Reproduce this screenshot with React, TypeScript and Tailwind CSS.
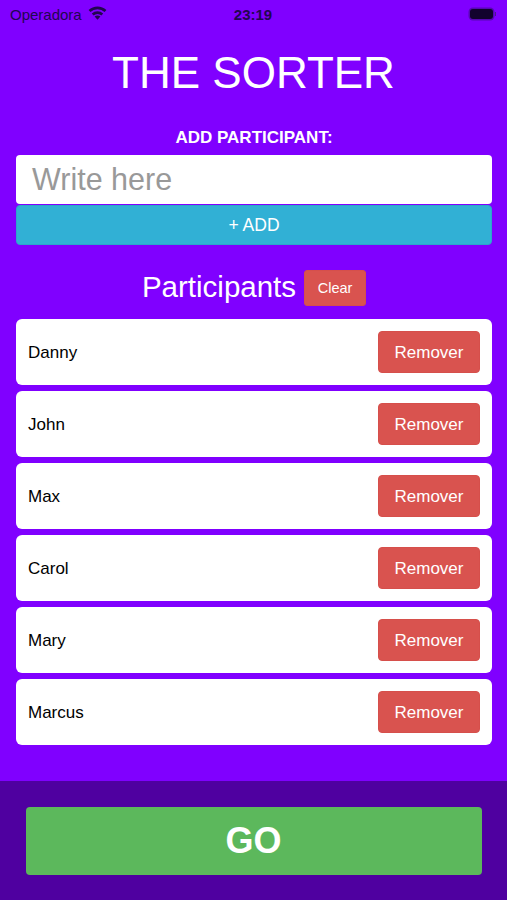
const participants = ["Danny", "John", "Max", "Carol", "Mary", "Marcus"];

const App = () => {
  return (
    <div
      className="flex h-[900px] w-full flex-col overflow-hidden bg-[#8000ff] text-white"
      style={{ fontFamily: '"Liberation Sans", Arial, sans-serif' }}
    >
      {/* Status bar */}
      <div className="grid h-[28px] shrink-0 grid-cols-3 items-center pl-[10px] pr-[11px] text-[#220650]">
        <div className="flex items-center gap-[6px]">
          <span className="text-[15px] leading-none">Operadora</span>
          <svg width="19" height="14" viewBox="0 0 19 14" fill="none" stroke="currentColor" strokeWidth="2.700" className="mb-[2px]">
            <path d="M1.500 5C6 .700 13 .700 17.500 5" />
            <path d="M4.700 8.400C7.400 5.900 11.600 5.900 14.300 8.400" />
            <path d="M9.500 13.700L6.600 10.500C8.300 9.300 10.700 9.300 12.400 10.500Z" fill="currentColor" stroke="none" />
          </svg>
        </div>
        <span className="text-center text-[15px] font-bold leading-none">23:19</span>
        <div className="flex items-center justify-end">
          <div className="h-[10px] w-[23px] rounded-[3px] bg-[#12022e] shadow-[0_0_0_1.500px_rgba(60,10,130,0.6)]" />
          <div className="ml-[2px] h-[4px] w-[1px] bg-[#4a1a8c]" />
        </div>
      </div>

      <h1 className="mt-[16px] text-center text-[44px] font-normal leading-[58px]">
        THE SORTER
      </h1>

      <main className="mt-[25px] flex flex-1 flex-col pl-[16px] pr-[15px]">
        <label className="pt-[1px] text-center text-[17px] font-bold leading-[19px]">
          ADD PARTICIPANT:
        </label>

        <div className="mt-[8px] flex h-[49px] items-center rounded-[4px] bg-white pl-[16px] text-[30.500px] leading-none text-[#999999]">
          Write here
        </div>
        <button className="mt-[1px] h-[40px] rounded-[4px] border border-[#2ba6cb] bg-[#31b0d5] text-[17.500px] text-white">
          + ADD
        </button>

        <div className="mt-[25px] flex h-[36px] items-center justify-center gap-[8px]">
          <h2 className="pb-[2px] text-[29.500px] font-normal leading-none">Participants</h2>
          <button className="h-[36px] w-[62px] rounded-[3px] border border-[#d64f4b] bg-[#d9534f] pt-[2px] text-[14.500px] text-white">
            Clear
          </button>
        </div>

        <ul className="mt-[13px] flex flex-col gap-[6px]">
          {participants.map((name) => (
            <li
              key={name}
              className="flex h-[66px] items-center justify-between rounded-[6px] bg-white pl-[12px] pr-[12px]"
            >
              <span className="pt-[2px] text-[17px] text-black">{name}</span>
              <button className="h-[42px] w-[102px] rounded-[4px] border border-[#d64f4b] bg-[#d9534f] pt-[2px] text-[17px] text-white">
                Remover
              </button>
            </li>
          ))}
        </ul>
      </main>

      {/* Footer */}
      <div className="flex h-[119px] shrink-0 justify-center bg-[#4f00a0] pt-[26px]">
        <button className="h-[68px] w-[456px] rounded-[4px] bg-[#5cb85c] text-[36px] font-bold text-white">
          GO
        </button>
      </div>
    </div>
  );
};

export default App;
